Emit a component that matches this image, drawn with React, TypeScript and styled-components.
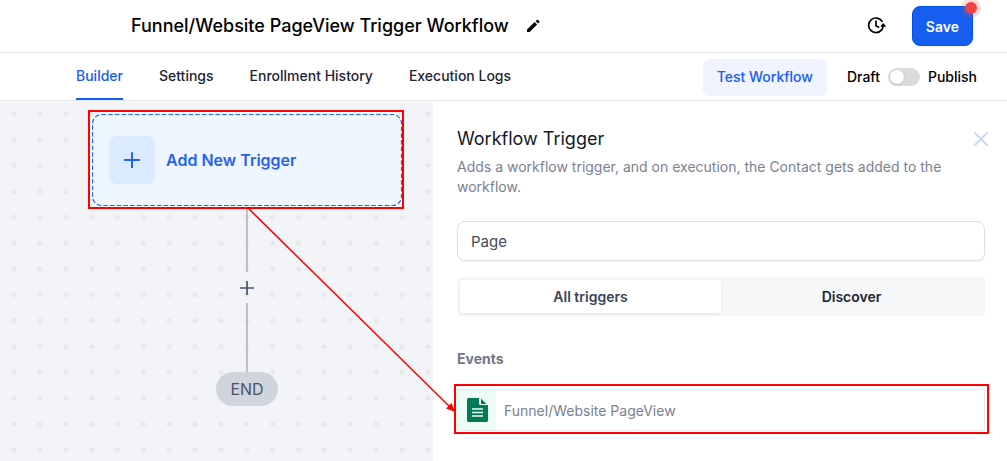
import React, { useState } from 'react';
import styled, { createGlobalStyle, css } from 'styled-components';

const GlobalStyle = createGlobalStyle`
  *, *::before, *::after { box-sizing: border-box; }
  body { margin: 0; background: #fff; font-family: Inter, "Liberation Sans", sans-serif; color: #101828; }
  button, input { font: inherit; color: inherit; }
  h1, h2, h3, p { margin: 0; }
`;

const Page = styled.div`
  display: flex;
  flex-direction: column;
  min-height: 100vh;
`;

const Header = styled.header`
  display: flex;
  align-items: center;
  height: 53px;
  padding: 0 34px 0 131px;
  border-bottom: 1px solid #e4e7ec;
`;

const Title = styled.h1`
  font-size: 18px;
  line-height: 24px;
  font-weight: 500;
  color: #000;
`;

const IconButton = styled.button`
  display: flex;
  padding: 0;
  border: 0;
  background: none;
  color: #000;
  cursor: pointer;
`;

const EditButton = styled(IconButton)`
  margin-left: 16px;
`;

const HistoryButton = styled(IconButton)`
  margin-left: auto;
`;

const SaveButton = styled.button`
  position: relative;
  height: 40px;
  margin-left: 25px;
  padding: 0 13px;
  border: 1px solid #004eeb;
  border-radius: 8px;
  background: #155eef;
  color: #fff;
  font-size: 14px;
  font-weight: 600;
  cursor: pointer;
`;

const UnsavedDot = styled.span`
  position: absolute;
  top: -5px;
  right: -5px;
  width: 12px;
  height: 12px;
  border-radius: 50%;
  background: #f04444;
  box-shadow: 0 0 0 4px rgba(240, 68, 68, 0.2);
`;

const TabBar = styled.div`
  display: flex;
  align-items: center;
  height: 48px;
  padding: 0 30px 0 76px;
  border-bottom: 1px solid #e4e7ec;
`;

const Tabs = styled.nav`
  display: flex;
  align-self: stretch;
  gap: 36px;
`;

const Tab = styled.a<{ $active?: boolean }>`
  display: flex;
  align-items: center;
  border-bottom: 2px solid ${p => (p.$active ? '#155eef' : 'transparent')};
  color: ${p => (p.$active ? '#155eef' : '#1d2433')};
  font-size: 14px;
  font-weight: 500;
  text-decoration: none;
`;

const TestButton = styled.button`
  height: 36px;
  margin-left: auto;
  padding: 0 14px;
  border: 0;
  border-radius: 8px;
  background: #eff4ff;
  box-shadow: 0 1px 2px rgba(16, 24, 40, 0.06);
  color: #155eef;
  font-size: 14px;
  font-weight: 500;
  cursor: pointer;
`;

const PublishToggle = styled.label`
  display: flex;
  align-items: center;
  gap: 8px;
  margin-left: 20px;
  color: #000;
  font-size: 14px;
  font-weight: 500;
`;

const Switch = styled.input`
  appearance: none;
  width: 32px;
  height: 18px;
  margin: 0;
  padding: 2px;
  border-radius: 9px;
  background: #dbdbdb;
  cursor: pointer;
  &::before {
    content: '';
    display: block;
    width: 14px;
    height: 14px;
    border-radius: 50%;
    background: #fff;
    box-shadow: 0 1px 2px rgba(0, 0, 0, 0.15);
  }
  &:checked { background: #155eef; }
  &:checked::before { margin-left: 14px; }
`;

const Workspace = styled.main`
  position: relative;
  display: flex;
  flex: 1;
`;

const Canvas = styled.section`
  position: relative;
  flex: 0 0 43%;
  min-height: 360px;
  background: #f2f4f7;
  overflow: hidden;
`;

const DotGrid = styled.svg`
  position: absolute;
  inset: 0;
  width: 100%;
  height: 100%;
`;

const Flow = styled.div`
  position: absolute;
  top: 13px;
  left: 92px;
  width: 310px;
  display: flex;
  flex-direction: column;
  align-items: center;
`;

const TriggerNode = styled.button`
  display: flex;
  align-items: center;
  gap: 11px;
  width: 100%;
  height: 92px;
  padding: 0 17px;
  border: 0;
  border-radius: 10px;
  background: #eff6ff;
  box-shadow: 0 0 0 2px #f8fafd;
  color: #2563eb;
  font-size: 16px;
  font-weight: 600;
  cursor: pointer;
`;

const DashedOutline = styled.svg`
  position: absolute;
  top: 0;
  left: 0;
  pointer-events: none;
`;

const TriggerIcon = styled.span`
  display: flex;
  align-items: center;
  justify-content: center;
  width: 46px;
  height: 48px;
  border-radius: 8px;
  background: #dbeafe;
`;

const Connector = styled.div<{ $height: number }>`
  width: 2px;
  height: ${p => p.$height}px;
  background: #bfc0c5;
`;

const AddStep = styled(IconButton)`
  align-items: center;
  justify-content: center;
  width: 32px;
  height: 31px;
  color: #475467;
`;

const EndNode = styled.div`
  padding: 0 14px;
  border-radius: 17px;
  background: #d0d5dd;
  color: #475467;
  font-size: 16px;
  line-height: 34px;
`;

const Panel = styled.aside`
  flex: 1;
  min-width: 0;
  padding: 26px 22px 27px 24px;
`;

const PanelHead = styled.div`
  display: flex;
  align-items: center;
  justify-content: space-between;
  margin-right: -5px;
`;

const PanelTitle = styled.h2`
  font-size: 18px;
  line-height: 24px;
  font-weight: 400;
`;

const Description = styled.p`
  margin: 6px 0 24px;
  padding-right: 20px;
  color: #7b8190;
  font-size: 14px;
  line-height: 20px;
`;

const SearchInput = styled.input`
  display: block;
  width: 100%;
  height: 40px;
  padding: 0 13px;
  border: 1px solid #dcdfe5;
  border-radius: 8px;
  background: #fff;
  box-shadow: 0 1px 2px rgba(16, 24, 40, 0.05);
  color: #414c5e;
  font-size: 15px;
`;

const Segments = styled.div`
  display: flex;
  margin-top: 16px;
  padding: 3px;
  border-radius: 3px;
  background: #f6f7f9;
`;

const Segment = styled.button<{ $active?: boolean }>`
  flex: 1;
  height: 33px;
  padding: 0;
  border: 0;
  border-radius: 3px;
  background: transparent;
  color: #1d2433;
  font-size: 14px;
  font-weight: 600;
  cursor: pointer;
  ${p =>
    p.$active &&
    css`
      background: #fff;
      color: #3b4658;
      box-shadow: 0 1px 3px rgba(16, 24, 40, 0.1);
    `}
`;

const GroupTitle = styled.h3`
  margin: 33px 0 20px;
  color: #717785;
  font-size: 14px;
  line-height: 20px;
  font-weight: 700;
`;

const EventRow = styled.button`
  position: relative;
  display: flex;
  align-items: center;
  gap: 8px;
  width: 100%;
  height: 42px;
  padding: 0;
  border: 1px solid #e4e7ec;
  background: #fff;
  color: #7b8190;
  font-size: 14px;
  cursor: pointer;
`;

const EventIcon = styled.span`
  display: flex;
  align-items: center;
  justify-content: center;
  width: 38px;
  height: 40px;
  background: #ecfdf5;
`;

const Highlight = styled.span<{ $inset: string }>`
  position: absolute;
  inset: ${p => p.$inset};
  border: 2px solid #f00;
  pointer-events: none;
`;

const NodeFrame = styled.div`
  position: relative;
  width: 100%;
`;

const Arrow = styled.svg`
  position: absolute;
  top: 0;
  left: 0;
  pointer-events: none;
`;

const Plus = ({ size, width }: { size: number; width: number }) => (
  <svg width={size} height={size} viewBox="0 0 16 16" fill="none" stroke="currentColor" strokeWidth={width}>
    <path d="M8 1v14M1 8h14" />
  </svg>
);

const PencilIcon = () => (
  <svg width="16" height="16" viewBox="0 0 16 16" fill="currentColor">
    <path d="M2 14v-2.600l7.600-7.300 2.500 2.500L4.600 14zM10.600 3.200l1.200-1.100a1 1 0 0 1 1.400 0l.9.9a1 1 0 0 1 0 1.400L13.100 5.600z" />
  </svg>
);

const ClockIcon = () => (
  <svg width="22" height="22" viewBox="0 0 22 22" fill="none" stroke="currentColor" strokeWidth="1.700" strokeLinecap="round" strokeLinejoin="round">
    <path d="M17.100 6.400A7.300 7.300 0 1 0 16.600 14.900M11 6.200v4.500l2.600 1.500" />
    <path d="M18.200 8.900l2 2.200h-4z" fill="currentColor" strokeWidth="1.200" />
    <path d="M18.100 11c-.1 1.500-.6 2.700-1.500 3.900" />
  </svg>
);

const DocumentIcon = () => (
  <svg width="21" height="24" viewBox="0 0 21 24">
    <path fill="#047857" d="M1.500 0H12v5.500A1.500 1.500 0 0 0 13.500 7H21v15.500a1.500 1.500 0 0 1-1.500 1.500h-18A1.500 1.500 0 0 1 0 22.500v-21A1.500 1.500 0 0 1 1.500 0zM14 0.500l5.500 5.500H14z" />
    <path stroke="#ecfdf5" strokeWidth="1.500" d="M5 11h11M5 14.500h11M5 18h11" />
  </svg>
);

const CloseIcon = () => (
  <svg width="18" height="18" viewBox="0 0 18 18" fill="none" stroke="#c7d7fe" strokeWidth="2" strokeLinecap="round">
    <path d="M3 3l12 12M15 3L3 15" />
  </svg>
);

const tabs = ['Builder', 'Settings', 'Enrollment History', 'Execution Logs'];

export default function App() {
  const [query, setQuery] = useState('Page');
  return (
    <Page>
      <GlobalStyle />
      <Header>
        <Title>Funnel/Website PageView Trigger Workflow</Title>
        <EditButton aria-label="Rename workflow"><PencilIcon /></EditButton>
        <HistoryButton aria-label="Version history"><ClockIcon /></HistoryButton>
        <SaveButton>Save<UnsavedDot /></SaveButton>
      </Header>
      <TabBar>
        <Tabs>
          {tabs.map((name, i) => (
            <Tab key={name} href="#" $active={i === 0}>{name}</Tab>
          ))}
        </Tabs>
        <TestButton>Test Workflow</TestButton>
        <PublishToggle>
          Draft
          <Switch type="checkbox" role="switch" />
          Publish
        </PublishToggle>
      </TabBar>
      <Workspace>
        <Canvas>
          <DotGrid>
            <defs>
              <pattern id="dots" x="1.100" y="-0.200" width="25.860" height="25.860" patternUnits="userSpaceOnUse">
                <circle cx="12.930" cy="12.930" r="2.600" fill="#e7e8e9" />
              </pattern>
            </defs>
            <rect width="100%" height="100%" fill="url(#dots)" />
          </DotGrid>
          <Flow>
            <NodeFrame>
              <TriggerNode>
                <TriggerIcon><Plus size={18} width={1.8} /></TriggerIcon>
                Add New Trigger
              </TriggerNode>
              <DashedOutline width="310" height="92" fill="none">
                <rect x="0.500" y="0.500" width="309" height="91" rx="9" stroke="#2563eb" strokeWidth="1.200" strokeDasharray="4.500 2.200" />
              </DashedOutline>
              <Highlight $inset="-4px -2px -3px -4px" />
            </NodeFrame>
            <Connector $height={66} />
            <AddStep aria-label="Add step"><Plus size={16} width={1.7} /></AddStep>
            <Connector $height={69} />
            <EndNode>END</EndNode>
          </Flow>
        </Canvas>
        <Panel>
          <PanelHead>
            <PanelTitle>Workflow Trigger</PanelTitle>
            <IconButton aria-label="Close"><CloseIcon /></IconButton>
          </PanelHead>
          <Description>
            Adds a workflow trigger, and on execution, the Contact gets added to the workflow.
          </Description>
          <SearchInput aria-label="Search triggers" value={query} onChange={e => setQuery(e.target.value)} />
          <Segments>
            <Segment $active>All triggers</Segment>
            <Segment>Discover</Segment>
          </Segments>
          <GroupTitle>Events</GroupTitle>
          <EventRow>
            <EventIcon><DocumentIcon /></EventIcon>
            Funnel/Website PageView
            <Highlight $inset="-6px -5px -4px -4px" />
          </EventRow>
        </Panel>
        <Arrow width="460" height="320">
          <path d="M248 107L450 306" stroke="#f00" strokeWidth="1.500" />
          <path d="M455 311l-9-3.500 5.500-5.500z" fill="#f00" />
        </Arrow>
      </Workspace>
    </Page>
  );
}
